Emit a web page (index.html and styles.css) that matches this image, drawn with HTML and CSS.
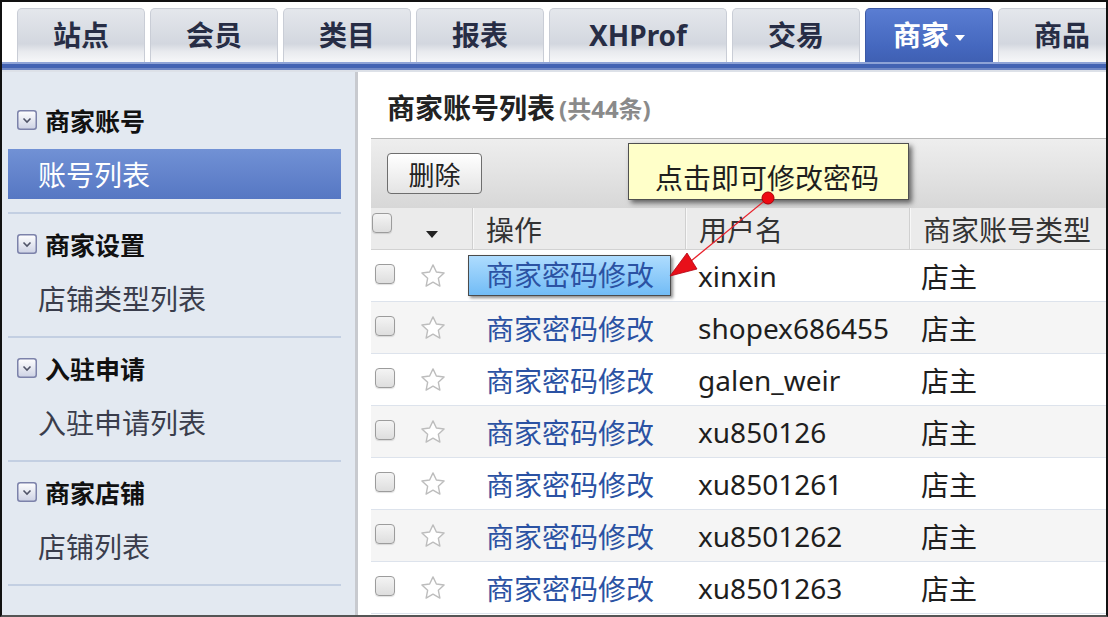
FILE: index.html
```html
<!DOCTYPE html>
<html lang="zh">
<head>
<meta charset="utf-8">
<title>商家账号列表</title>
<link rel="stylesheet" href="styles.css">
</head>
<body>
<div class="frame">
  <div class="nav">
    <div class="tab">站点</div>
    <div class="tab">会员</div>
    <div class="tab">类目</div>
    <div class="tab">报表</div>
    <div class="tab wide">XHProf</div>
    <div class="tab">交易</div>
    <div class="tab active">商家<span class="caret"></span></div>
    <div class="tab">商品</div>
  </div>
  <div class="bar"></div>
  <div class="bar-shadow"></div>
  <div class="body">
    <aside class="side">
      <div class="group">
        <div class="ghead"><svg class="gicon" viewBox="0 0 20 20" width="20" height="20"><defs><linearGradient id="g1" x1="0" y1="0" x2="0" y2="1"><stop offset="0" stop-color="#ffffff"/><stop offset="1" stop-color="#cdd2e4"/></linearGradient></defs><rect x="0.75" y="0.75" width="18.5" height="18.5" rx="2.5" fill="url(#g1)" stroke="#7c82aa" stroke-width="1.5"/><path d="M6.5 8.5 L10 12 L13.5 8.5" fill="none" stroke="#505468" stroke-width="1.6"/></svg>商家账号</div>
        <div class="item active">账号列表</div>
      </div>
      <div class="group">
        <div class="ghead"><svg class="gicon" viewBox="0 0 20 20" width="20" height="20"><rect x="0.75" y="0.75" width="18.5" height="18.5" rx="2.5" fill="url(#g1)" stroke="#7c82aa" stroke-width="1.5"/><path d="M6.5 8.5 L10 12 L13.5 8.5" fill="none" stroke="#505468" stroke-width="1.6"/></svg>商家设置</div>
        <div class="item">店铺类型列表</div>
      </div>
      <div class="group">
        <div class="ghead"><svg class="gicon" viewBox="0 0 20 20" width="20" height="20"><rect x="0.75" y="0.75" width="18.5" height="18.5" rx="2.5" fill="url(#g1)" stroke="#7c82aa" stroke-width="1.5"/><path d="M6.5 8.5 L10 12 L13.5 8.5" fill="none" stroke="#505468" stroke-width="1.6"/></svg>入驻申请</div>
        <div class="item">入驻申请列表</div>
      </div>
      <div class="group">
        <div class="ghead"><svg class="gicon" viewBox="0 0 20 20" width="20" height="20"><rect x="0.75" y="0.75" width="18.5" height="18.5" rx="2.5" fill="url(#g1)" stroke="#7c82aa" stroke-width="1.5"/><path d="M6.5 8.5 L10 12 L13.5 8.5" fill="none" stroke="#505468" stroke-width="1.6"/></svg>商家店铺</div>
        <div class="item">店铺列表</div>
      </div>
    </aside>
    <main class="main">
      <div class="title"><h1>商家账号列表</h1><span class="count">(共44条)</span></div>
      <div class="toolbar"><button class="btn">删除</button></div>
      <div class="thead">
        <div class="th first"><span class="cb"></span><span class="sort"></span></div>
        <div class="th">操作</div>
        <div class="th">用户名</div>
        <div class="th">商家账号类型</div>
      </div>
      <div class="tbody">
        <div class="row">
          <div class="td first"><span class="cb"></span><svg class="star" viewBox="0 0 24 24" width="28" height="28"><path d="M12 2.5l2.9 6.1 6.6.8-4.9 4.6 1.3 6.6L12 17.3l-5.9 3.3 1.3-6.6-4.9-4.6 6.6-.8z" fill="#fff" stroke="#bdbdbd" stroke-width="1.2" stroke-linejoin="round"/></svg></div>
          <div class="td"><a class="link hl" href="#">商家密码修改</a></div>
          <div class="td">xinxin</div>
          <div class="td">店主</div>
        </div>
        <div class="row">
          <div class="td first"><span class="cb"></span><svg class="star" viewBox="0 0 24 24" width="28" height="28"><path d="M12 2.5l2.9 6.1 6.6.8-4.9 4.6 1.3 6.6L12 17.3l-5.9 3.3 1.3-6.6-4.9-4.6 6.6-.8z" fill="#fff" stroke="#bdbdbd" stroke-width="1.2" stroke-linejoin="round"/></svg></div>
          <div class="td"><a class="link" href="#">商家密码修改</a></div>
          <div class="td">shopex686455</div>
          <div class="td">店主</div>
        </div>
        <div class="row">
          <div class="td first"><span class="cb"></span><svg class="star" viewBox="0 0 24 24" width="28" height="28"><path d="M12 2.5l2.9 6.1 6.6.8-4.9 4.6 1.3 6.6L12 17.3l-5.9 3.3 1.3-6.6-4.9-4.6 6.6-.8z" fill="#fff" stroke="#bdbdbd" stroke-width="1.2" stroke-linejoin="round"/></svg></div>
          <div class="td"><a class="link" href="#">商家密码修改</a></div>
          <div class="td">galen_weir</div>
          <div class="td">店主</div>
        </div>
        <div class="row">
          <div class="td first"><span class="cb"></span><svg class="star" viewBox="0 0 24 24" width="28" height="28"><path d="M12 2.5l2.9 6.1 6.6.8-4.9 4.6 1.3 6.6L12 17.3l-5.9 3.3 1.3-6.6-4.9-4.6 6.6-.8z" fill="#fff" stroke="#bdbdbd" stroke-width="1.2" stroke-linejoin="round"/></svg></div>
          <div class="td"><a class="link" href="#">商家密码修改</a></div>
          <div class="td">xu850126</div>
          <div class="td">店主</div>
        </div>
        <div class="row">
          <div class="td first"><span class="cb"></span><svg class="star" viewBox="0 0 24 24" width="28" height="28"><path d="M12 2.5l2.9 6.1 6.6.8-4.9 4.6 1.3 6.6L12 17.3l-5.9 3.3 1.3-6.6-4.9-4.6 6.6-.8z" fill="#fff" stroke="#bdbdbd" stroke-width="1.2" stroke-linejoin="round"/></svg></div>
          <div class="td"><a class="link" href="#">商家密码修改</a></div>
          <div class="td">xu8501261</div>
          <div class="td">店主</div>
        </div>
        <div class="row">
          <div class="td first"><span class="cb"></span><svg class="star" viewBox="0 0 24 24" width="28" height="28"><path d="M12 2.5l2.9 6.1 6.6.8-4.9 4.6 1.3 6.6L12 17.3l-5.9 3.3 1.3-6.6-4.9-4.6 6.6-.8z" fill="#fff" stroke="#bdbdbd" stroke-width="1.2" stroke-linejoin="round"/></svg></div>
          <div class="td"><a class="link" href="#">商家密码修改</a></div>
          <div class="td">xu8501262</div>
          <div class="td">店主</div>
        </div>
        <div class="row">
          <div class="td first"><span class="cb"></span><svg class="star" viewBox="0 0 24 24" width="28" height="28"><path d="M12 2.5l2.9 6.1 6.6.8-4.9 4.6 1.3 6.6L12 17.3l-5.9 3.3 1.3-6.6-4.9-4.6 6.6-.8z" fill="#fff" stroke="#bdbdbd" stroke-width="1.2" stroke-linejoin="round"/></svg></div>
          <div class="td"><a class="link" href="#">商家密码修改</a></div>
          <div class="td">xu8501263</div>
          <div class="td">店主</div>
        </div>
      </div>
      <div class="tip">点击即可修改密码</div>
      <svg class="pointer" viewBox="0 0 748 300" width="748" height="300">
        <line x1="410" y1="126" x2="333" y2="189" stroke="#e8202a" stroke-width="1.3"/>
        <polygon points="312,204 329,181 339,197" fill="#e8101a" stroke="#b00010" stroke-width="0.8"/>
        <circle cx="410" cy="126" r="6" fill="#ee0a12" stroke="#a80008" stroke-width="1"/>
      </svg>
    </main>
  </div>
</div>
</body>
</html>
```
FILE: styles.css
```css
* { box-sizing: border-box; }

body {
  margin: 0;
  font-family: "Noto Sans", "Noto Sans CJK SC", sans-serif;
  background: #fff;
}

.frame {
  width: 1108px;
  height: 617px;
  border: 2px solid #111;
  border-bottom-color: #555;
  display: flex;
  flex-direction: column;
  overflow: hidden;
  background: #fff;
}

/* top navigation */
.nav {
  height: 60px;
  flex-shrink: 0;
  display: flex;
  align-items: flex-end;
  gap: 5px;
  padding-left: 15px;
}

.tab {
  flex-shrink: 0;
  width: 128px;
  height: 54px;
  border: 1px solid #c9cdd6;
  border-bottom: none;
  border-radius: 5px 5px 0 0;
  background: linear-gradient(#e4e7ec, #d3d7df 66%, #e8eaee 80%, #f6f7f9);
  display: flex;
  align-items: center;
  justify-content: center;
  padding-bottom: 2px;
  font-weight: bold;
  font-size: 28px;
  color: #272d45;
  line-height: 1;
}

.tab.wide { width: 178px; }

.tab.active {
  background: linear-gradient(#5a7dd2, #4568bf 70%, #3f60b3);
  border-color: #3c59a6;
  color: #fff;
}

.caret {
  width: 0;
  height: 0;
  border-left: 5px solid transparent;
  border-right: 5px solid transparent;
  border-top: 6px solid #fff;
  margin: 6px 0 0 6px;
}

.bar {
  height: 8px;
  flex-shrink: 0;
  background: #4363b3;
  border-top: 2px solid #8ea3d6;
  border-bottom: 2px solid #6f87c4;
}

.bar-shadow {
  height: 2px;
  flex-shrink: 0;
  background: #dde1e8;
}

.body {
  flex: 1;
  display: flex;
  min-height: 0;
}

/* sidebar */
.side {
  width: 356px;
  flex-shrink: 0;
  background: #e3e9f1;
  border-right: 3px solid #c8cacf;
  padding: 18px 14px 0 6px;
}

.group {
  padding-top: 10px;
  border-bottom: 2px solid #c3cfe2;
}

.ghead {
  height: 40px;
  display: flex;
  align-items: center;
  gap: 8px;
  padding-left: 9px;
  font-weight: bold;
  font-size: 25px;
  color: #111;
}

.gicon { flex-shrink: 0; }

.item {
  height: 50px;
  margin: 9px 0 13px;
  padding-left: 30px;
  display: flex;
  align-items: center;
  font-size: 28px;
  color: #3a3d4c;
}

.item.active {
  background: linear-gradient(#7191d5, #5677c3);
  color: #fff;
}

/* main area */
.main {
  flex: 1;
  position: relative;
  padding-left: 13px;
  display: flex;
  flex-direction: column;
  min-width: 0;
}

.title {
  height: 66px;
  flex-shrink: 0;
  display: flex;
  align-items: center;
  gap: 4px;
  padding: 4px 0 0 16px;
}

.title h1 {
  margin: 0;
  font-size: 28px;
  font-weight: bold;
  color: #222;
}

.count {
  font-size: 24px;
  font-weight: bold;
  color: #8a8a8a;
}

.toolbar {
  height: 70px;
  flex-shrink: 0;
  border-top: 1px solid #b9b9b9;
  background: linear-gradient(#eeeeee, #e3e3e3 50%, #d7d7d7);
  padding: 14px 0 0 16px;
}

.btn {
  width: 95px;
  height: 41px;
  border: 1px solid #6e6e6e;
  border-radius: 4px;
  background: linear-gradient(#ffffff, #e4e4e4);
  font-family: "Noto Sans", "Noto Sans CJK SC", sans-serif;
  font-size: 26px;
  color: #222;
  display: flex;
  align-items: center;
  justify-content: center;
  padding: 0;
}

.thead,
.row {
  display: grid;
  grid-template-columns: 101px 213px 224px 1fr;
}

.thead {
  height: 42px;
  flex-shrink: 0;
  background: #ebebeb;
  border-bottom: 1px solid #d2d2d2;
}

.th {
  display: flex;
  align-items: center;
  padding-left: 13px;
  font-size: 28px;
  color: #333;
  border-left: 1px solid #d0d0d0;
  box-shadow: inset 1px 0 0 #f8f8f8;
}

.th.first {
  border-left: none;
  box-shadow: none;
  align-items: flex-start;
  padding: 5px 0 0 1px;
}

.sort {
  width: 0;
  height: 0;
  border-left: 6px solid transparent;
  border-right: 6px solid transparent;
  border-top: 7px solid #222;
  margin: 18px 0 0 34px;
}

.cb {
  flex-shrink: 0;
  width: 20px;
  height: 20px;
  border: 1px solid #9c9c9c;
  border-radius: 4px;
  background: linear-gradient(#f4f4f4, #dedede);
  box-shadow: 0 1px 1px rgba(0, 0, 0, 0.12);
}

.row {
  height: 52px;
  border-bottom: 1px solid #dde3ec;
  align-items: center;
}

.tbody .row:nth-child(even) { background: #f5f5f5; }

.td {
  padding-left: 13px;
  font-size: 28px;
  color: #1e1e1e;
  white-space: nowrap;
}

.td:nth-child(2) { padding-left: 14px; }
.td:nth-child(4) { padding-left: 12px; }

.td.first {
  display: flex;
  align-items: center;
  padding-left: 4px;
}

.td.first .cb { margin-top: -4px; }

.star {
  margin-left: 24px;
}

.link {
  color: #2b52a3;
  text-decoration: none;
}

.link.hl {
  display: inline-block;
  margin-left: -18px;
  padding: 0 16px 0 17px;
  height: 41px;
  line-height: 39px;
  border: 1px solid #4b4b4b;
  background: linear-gradient(#aedcfe, #72bcf6);
  box-shadow: 2px 2px 3px rgba(0, 0, 0, 0.45);
}

/* annotation overlay */
.tip {
  position: absolute;
  left: 270px;
  top: 71px;
  width: 281px;
  height: 57px;
  background: #ffffc9;
  border: 1px solid #505050;
  box-shadow: 3px 3px 5px rgba(0, 0, 0, 0.55);
  display: flex;
  align-items: center;
  padding: 10px 0 0 26px;
  font-size: 28px;
  color: #1e1e1e;
  white-space: nowrap;
}

.pointer {
  position: absolute;
  left: 0;
  top: 0;
  pointer-events: none;
  overflow: visible;
}
```
